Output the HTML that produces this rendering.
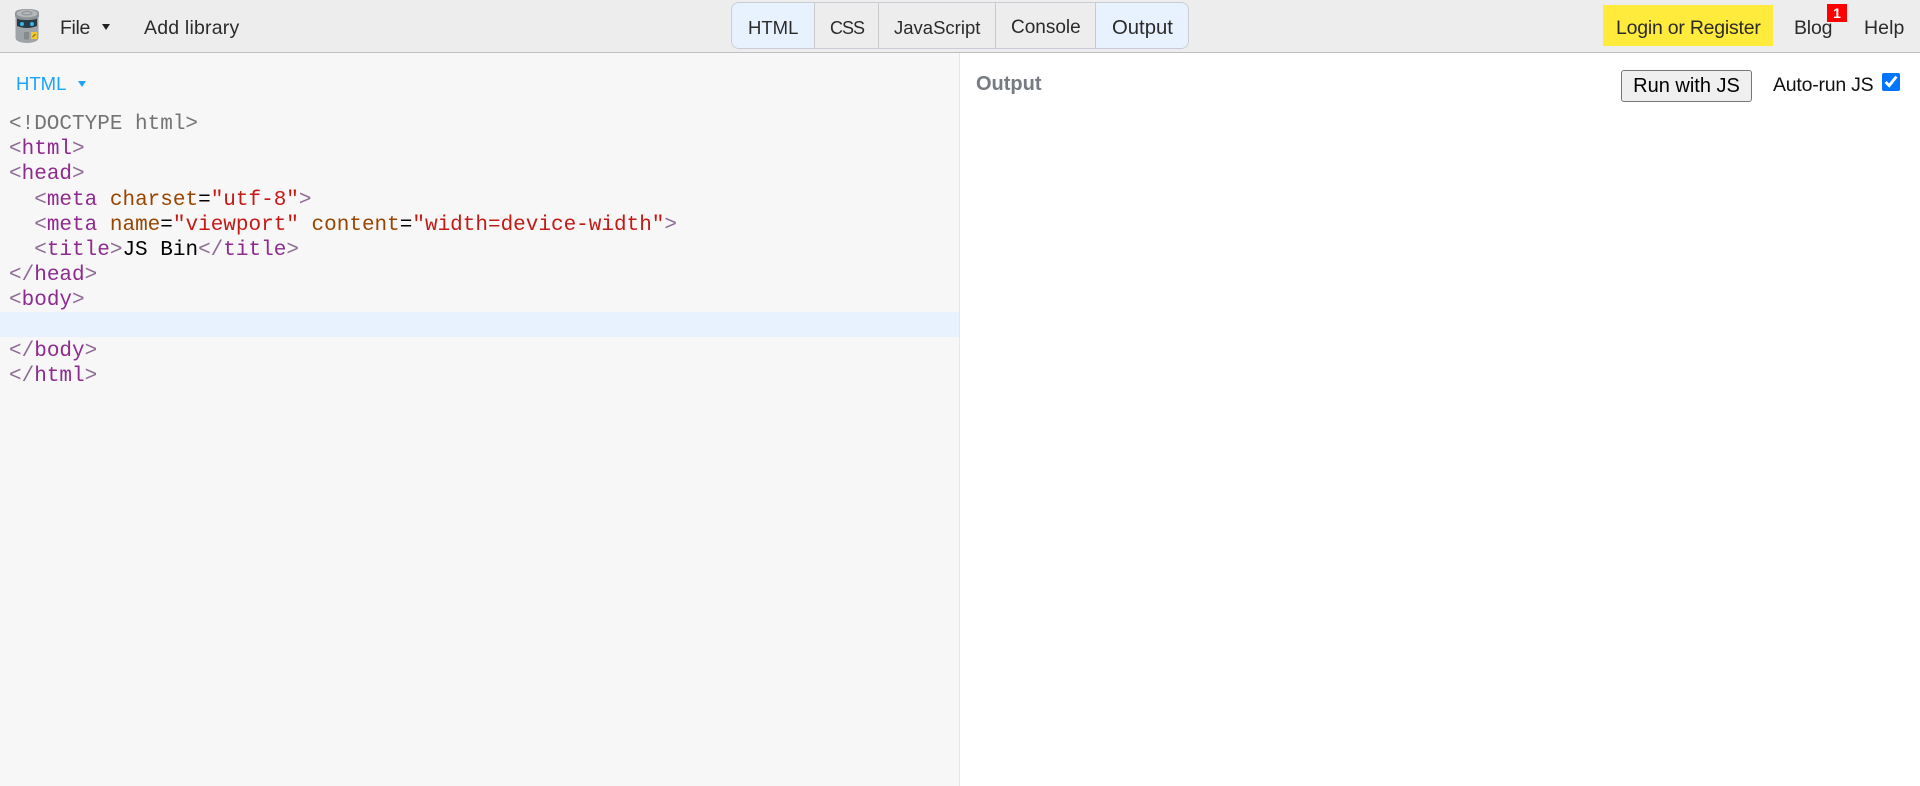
<!DOCTYPE html>
<html lang="en">
<head>
<meta charset="utf-8">
<title>JS Bin</title>
<style>
html,body{margin:0;padding:0;width:1920px;height:786px;overflow:hidden;background:#fff;font-family:"Liberation Sans",sans-serif;color:#2b2b2b}
.bar{position:absolute;left:0;top:0;width:1920px;height:52px;background:#ededed;border-bottom:1px solid #bfbfbf}
.left{position:absolute;left:0;top:53px;width:959px;height:733px;background:#f7f7f7;border-right:1px solid #e6e6e6}
.t{position:absolute;white-space:nowrap;font-size:19.5px;line-height:26px}
.tabs{position:absolute;left:731px;top:2px;width:456px;height:45px;border:1px solid #c9cdd3;border-radius:8px;overflow:hidden;background:#ededed}
.tab{position:absolute;top:0;height:45px;box-sizing:border-box;border-right:1px solid #c9c9c9}
.on{background:#e8f2ff}
.tri{position:absolute;width:0;height:0;border-left:4px solid transparent;border-right:4px solid transparent}
.hl{position:absolute;left:0;top:312px;width:959px;height:25px;background:#e8f2ff}
pre{position:absolute;left:9px;top:112px;margin:0;font-family:"Liberation Mono",monospace;font-size:21px;line-height:25.2px;color:#000}
.b{color:#8f6a96}.g{color:#747474}.k{color:#8f2a8f}.a{color:#994500}.v{color:#c41a16}
</style>
</head>
<body>
<div class="bar"></div>
<svg style="position:absolute;left:12px;top:7px" width="30" height="38" viewBox="0 0 30 38">
  <path d="M3.5 11 L26.5 11 L26.5 31 Q26 35.5 15 36 Q4 35.5 3.5 31 Z" fill="#9fa4a8"/>
  <path d="M5 11 L25 11 L25 19 Q15 23 5 19 Z" fill="#2a3a45"/>
  <path d="M3 6 Q3 2 15 2 Q27 2 27 6 L27 9 Q27 13 15 13 Q3 13 3 9 Z" fill="#8f9498"/>
  <ellipse cx="15" cy="6.5" rx="10.5" ry="3.8" fill="#b4b8bb"/>
  <ellipse cx="15" cy="6.2" rx="5" ry="1.7" fill="none" stroke="#8b9094" stroke-width="1"/>
  <circle cx="10" cy="17" r="2" fill="#35b6ea"/>
  <circle cx="20" cy="17" r="2" fill="#35b6ea"/>
  <rect x="12" y="25" width="5" height="7.5" fill="#868b8f"/>
  <rect x="19" y="25" width="6" height="7" fill="#f1c92f"/>
  <path d="M20.5 30 L23.5 27" stroke="#7a6410" stroke-width="1"/>
</svg>
<span class="t" style="left:60px;top:15px;letter-spacing:-.35px">File</span>
<div class="tri" style="left:101.5px;top:24px;border-top:6px solid #222"></div>
<span class="t" style="left:144px;top:15px;letter-spacing:.2px">Add library</span>

<div class="tabs">
  <div class="tab on" style="left:0;width:83px"></div>
  <div class="tab" style="left:83px;width:64px"></div>
  <div class="tab" style="left:147px;width:117px"></div>
  <div class="tab" style="left:264px;width:100px"></div>
  <div class="tab on" style="left:364px;width:92px;border-right:0"></div>
</div>
<span class="t" style="left:748px;top:15px;font-size:18.5px">HTML</span>
<span class="t" style="left:830px;top:15px;font-size:18px;letter-spacing:-1px">CSS</span>
<span class="t" style="left:894px;top:15px;font-size:18.5px">JavaScript</span>
<span class="t" style="left:1011px;top:15px;font-size:19px">Console</span>
<span class="t" style="left:1112px;top:15px;font-size:20.3px">Output</span>

<div style="position:absolute;left:1603px;top:5px;width:170px;height:41px;background:#ffeb3b"></div>
<span class="t" style="left:1616px;top:15px;letter-spacing:-.23px">Login or Register</span>
<span class="t" style="left:1794px;top:15px;letter-spacing:-.2px">Blog</span>
<div style="position:absolute;left:1827px;top:4px;width:20px;height:18px;background:#f00;color:#fff;font-weight:700;font-size:14px;line-height:18px;text-align:center">1</div>
<span class="t" style="left:1864px;top:15px;letter-spacing:.1px">Help</span>

<div class="left"></div>
<div class="hl"></div>
<span class="t" style="left:16px;top:71px;color:#1aa3ff;font-size:18.5px">HTML</span>
<div class="tri" style="left:78px;top:81px;border-top:6px solid #1aa3ff"></div>
<pre><span class="g">&lt;!DOCTYPE html&gt;</span>
<span class="b">&lt;</span><span class="k">html</span><span class="b">&gt;</span>
<span class="b">&lt;</span><span class="k">head</span><span class="b">&gt;</span>
  <span class="b">&lt;</span><span class="k">meta</span> <span class="a">charset</span>=<span class="v">"utf-8"</span><span class="b">&gt;</span>
  <span class="b">&lt;</span><span class="k">meta</span> <span class="a">name</span>=<span class="v">"viewport"</span> <span class="a">content</span>=<span class="v">"width=device-width"</span><span class="b">&gt;</span>
  <span class="b">&lt;</span><span class="k">title</span><span class="b">&gt;</span>JS Bin<span class="b">&lt;/</span><span class="k">title</span><span class="b">&gt;</span>
<span class="b">&lt;/</span><span class="k">head</span><span class="b">&gt;</span>
<span class="b">&lt;</span><span class="k">body</span><span class="b">&gt;</span>

<span class="b">&lt;/</span><span class="k">body</span><span class="b">&gt;</span>
<span class="b">&lt;/</span><span class="k">html</span><span class="b">&gt;</span></pre>

<span class="t" style="left:976px;top:71px;font-weight:700;font-size:20px;color:#757b80">Output</span>
<button style="position:absolute;left:1621px;top:70px;width:131px;height:32px;box-sizing:border-box;padding:0;border:1px solid #767676;border-radius:3px;background:#efefef;color:#000;font-family:'Liberation Sans',sans-serif;font-size:20px;line-height:28px">Run with JS</button>
<span class="t" style="left:1773px;top:72px;color:#111;letter-spacing:-.23px">Auto-run JS</span>
<input type="checkbox" checked style="position:absolute;left:1882px;top:73px;width:18px;height:18px;margin:0;accent-color:#0075ff">
</body>
</html>
